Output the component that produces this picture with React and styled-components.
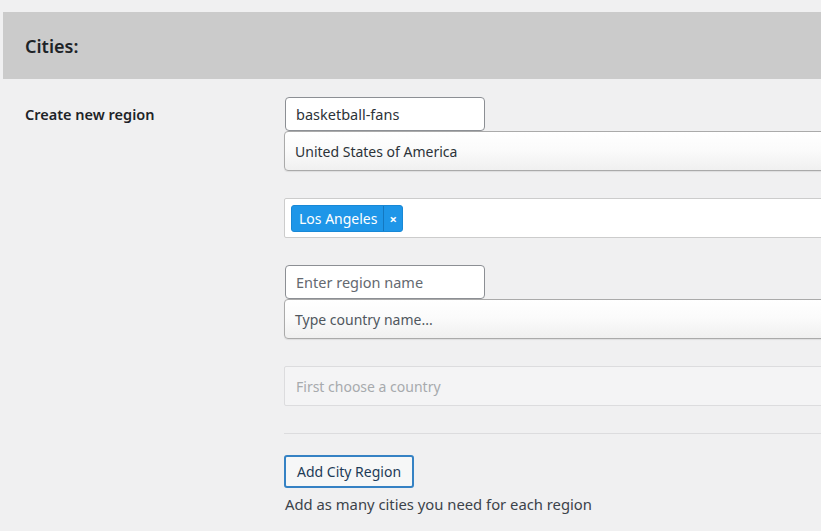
import React from 'react'
import styled, { createGlobalStyle } from 'styled-components'

const GlobalStyle = createGlobalStyle`
  html, body {
    margin: 0;
    padding: 0;
    background: #f0f0f1;
  }
  body {
    font-family: "Noto Sans", "Open Sans", sans-serif;
    color: #1d2327;
  }
`

const Page = styled.div`
  width: 821px;
  height: 531px;
  overflow: hidden;
  padding-top: 12px;
  box-sizing: border-box;
`

const Header = styled.div`
  margin-left: 3px;
  height: 67px;
  background: #cbcbcb;
  display: flex;
  align-items: center;
  padding-left: 22px;
  box-sizing: border-box;
`

const Title = styled.h2`
  margin: 0;
  font-size: 18px;
  font-weight: 600;
  color: #1d2327;
`

const Row = styled.div`
  display: grid;
  grid-template-columns: 259px 620px;
  padding: 18px 0 0 25px;
`

const Label = styled.div`
  font-size: 14.5px;
  font-weight: 600;
  line-height: 34px;
  color: #1d2327;
`

const Fields = styled.div`
  display: flex;
  flex-direction: column;
`

const Group = styled.div`
  display: flex;
  flex-direction: column;
  margin-bottom: 27px;
`

const TextInput = styled.input`
  width: 200px;
  height: 34px;
  margin-left: 1px;
  box-sizing: border-box;
  border: 1px solid #8c8f94;
  border-radius: 4px;
  background: #fff;
  padding: 0 10px;
  font-family: inherit;
  font-size: 14.5px;
  color: #2c3338;

  &::placeholder {
    color: #646970;
  }
`

const Select = styled.div`
  height: 40px;
  box-sizing: border-box;
  border: 1px solid #aaa;
  border-radius: 4px;
  background: linear-gradient(#fff 0%, #fbfbfb 45%, #f0f0f0 100%);
  box-shadow: 0 1px 1px rgba(0, 0, 0, 0.08);
  display: flex;
  align-items: center;
  padding: 0 10px;
  font-size: 14px;
  color: ${p => (p.$placeholder ? '#50575e' : '#2c3338')};
`

const Choices = styled.div`
  height: 40px;
  box-sizing: border-box;
  border: 1px solid #ccc;
  border-radius: 2px;
  background: ${p => (p.$disabled ? '#f4f4f5' : '#fff')};
  border-color: ${p => (p.$disabled ? '#dcdcde' : '#ccc')};
  display: flex;
  align-items: center;
  padding: 0 6px;
  font-size: 14px;
  color: #a7aaad;
`

const Placeholder = styled.span`
  padding-left: 5px;
`

const Tag = styled.div`
  display: flex;
  align-items: stretch;
  height: 27px;
  background: #1e96e8;
  border: 1px solid #1888d6;
  border-radius: 3px;
  box-sizing: border-box;
  color: #fff;
  font-size: 14px;
`

const TagText = styled.span`
  display: flex;
  align-items: center;
  padding: 0 6px 0 7px;
`

const TagClose = styled.span`
  display: flex;
  align-items: center;
  padding: 1px 5px 0;
  border-left: 1px solid #1478c0;
  font-size: 13px;
  font-weight: 700;
`

const Divider = styled.hr`
  margin: 0 0 21px;
  border: 0;
  border-top: 1px solid #dcdcde;
`

const Button = styled.button`
  align-self: flex-start;
  height: 33px;
  padding: 0 11px;
  border: 2px solid #3582c4;
  border-radius: 3px;
  background: #f6f7f7;
  font-family: inherit;
  font-size: 14px;
  color: #1d3b57;
`

const Description = styled.p`
  margin: 6px 0 0 1px;
  font-size: 14.8px;
  color: #3c434a;
`

const App = () => (
  <Page>
    <GlobalStyle />
    <Header>
      <Title>Cities:</Title>
    </Header>
    <Row>
      <Label>Create new region</Label>
      <Fields>
        <TextInput defaultValue="basketball-fans" />
        <Group>
          <Select>United States of America</Select>
        </Group>
        <Group>
          <Choices>
            <Tag>
              <TagText>Los Angeles</TagText>
              <TagClose>×</TagClose>
            </Tag>
          </Choices>
        </Group>
        <TextInput placeholder="Enter region name" />
        <Group>
          <Select $placeholder>Type country name...</Select>
        </Group>
        <Group>
          <Choices $disabled>
            <Placeholder>First choose a country</Placeholder>
          </Choices>
        </Group>
        <Divider />
        <Button>Add City Region</Button>
        <Description>Add as many cities you need for each region</Description>
      </Fields>
    </Row>
  </Page>
)

export default App
